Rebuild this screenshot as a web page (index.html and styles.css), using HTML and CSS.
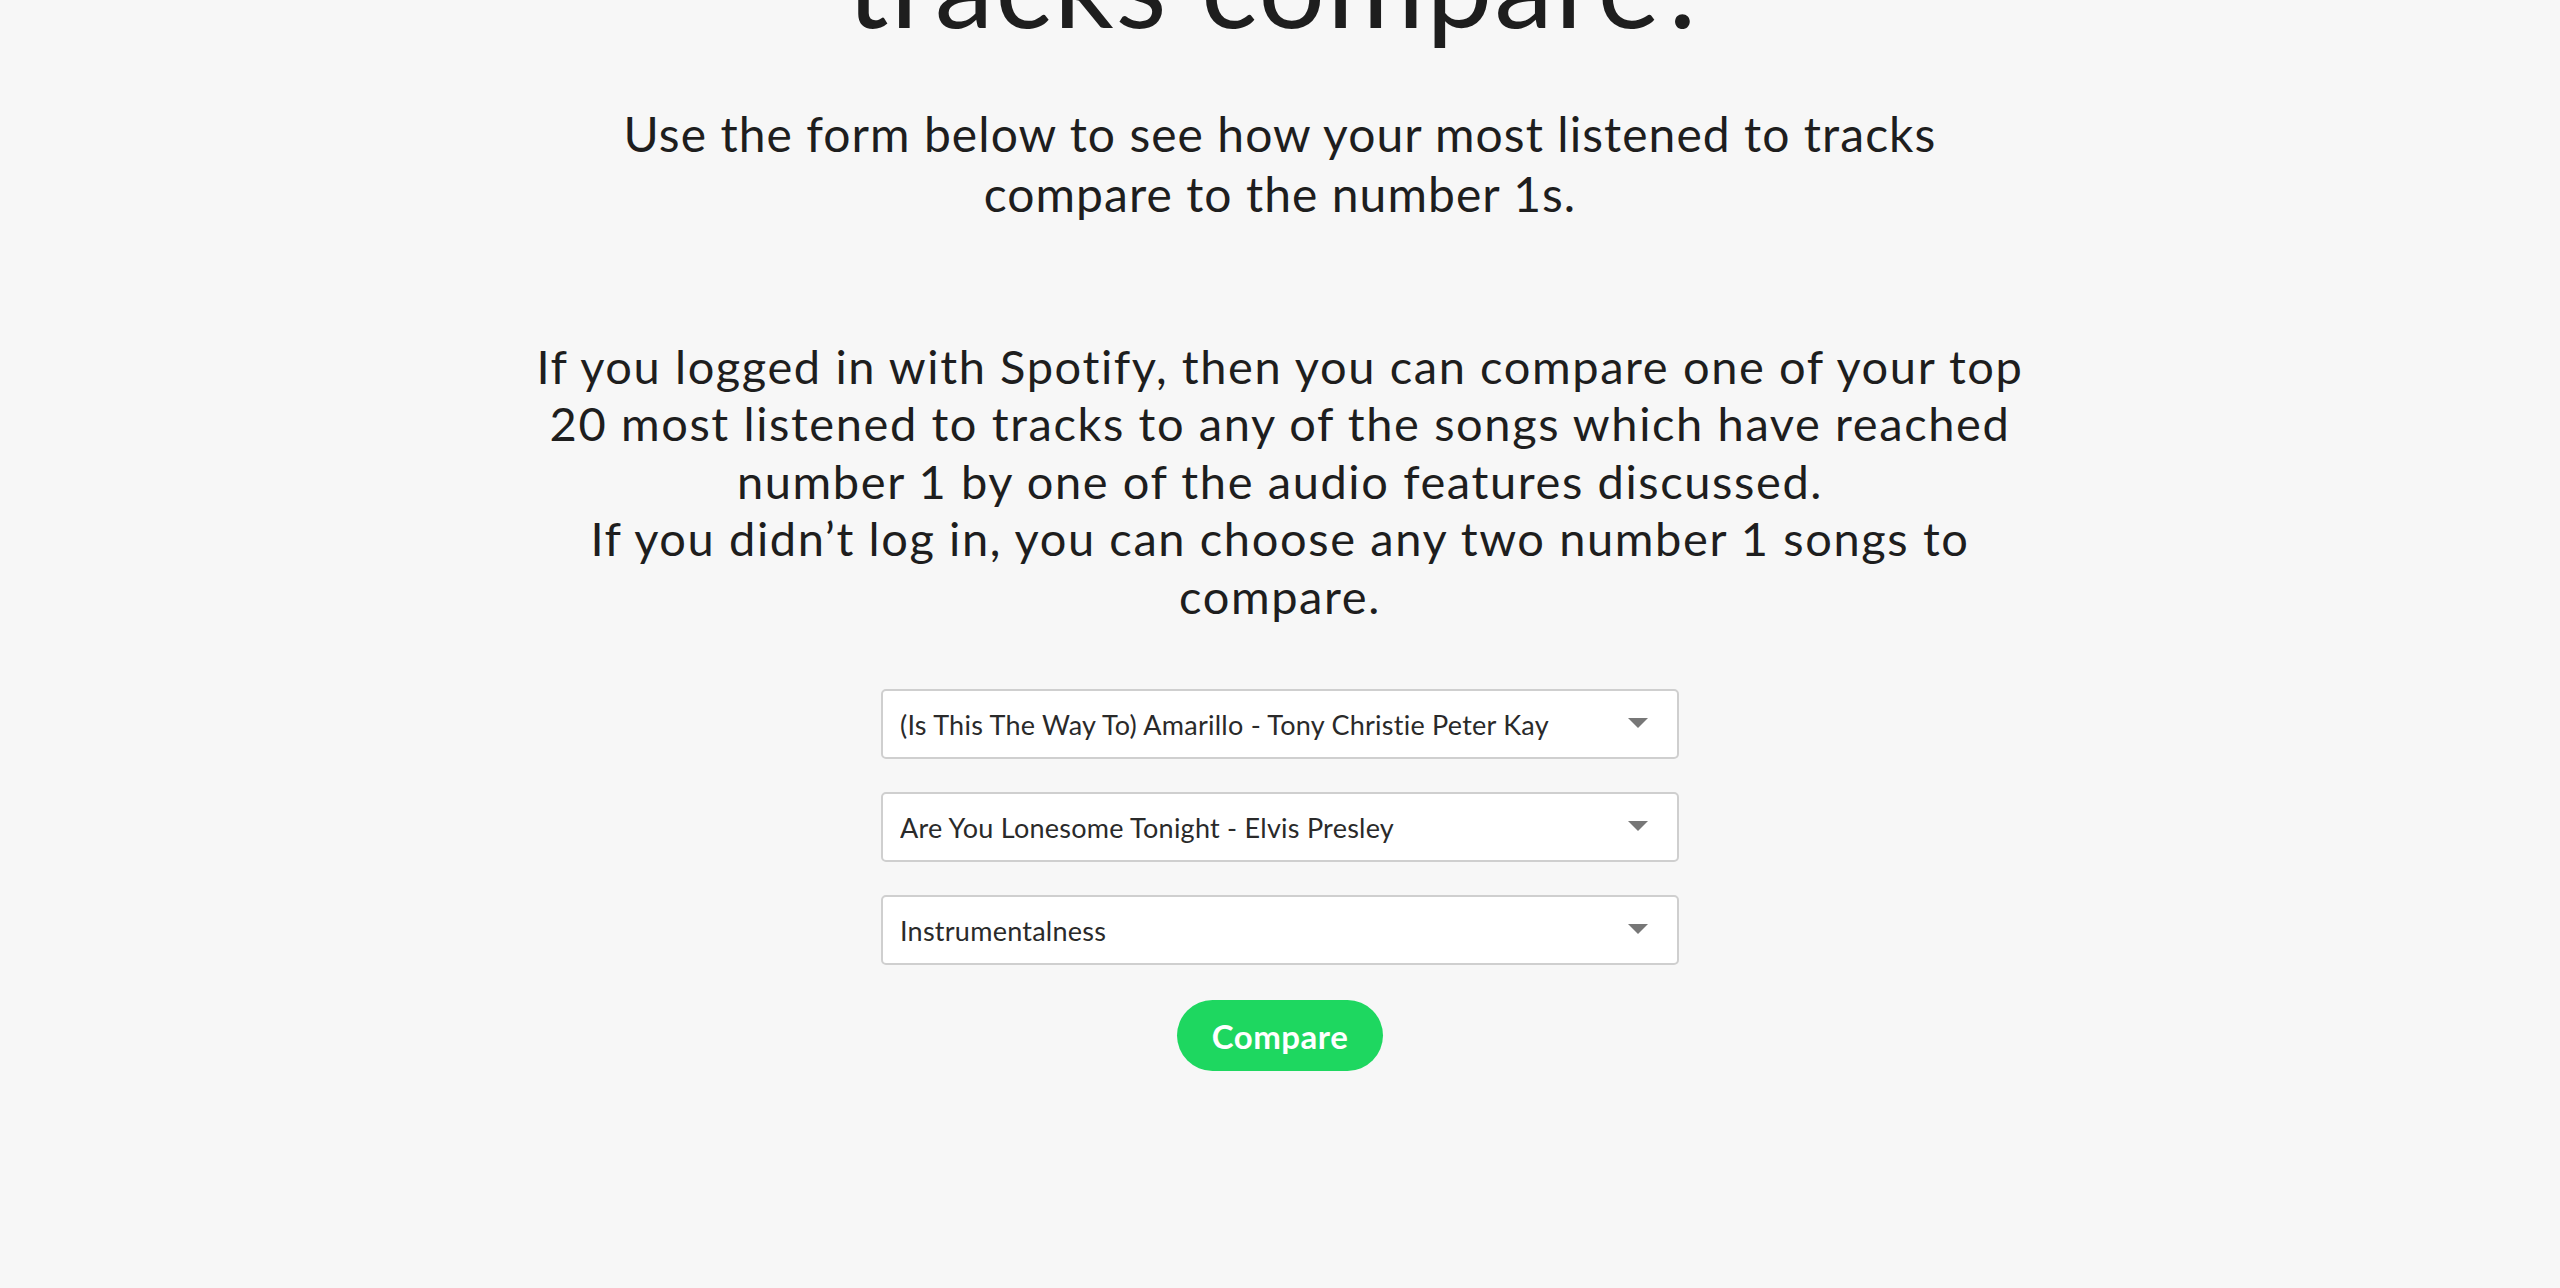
FILE: index.html
```html
<!DOCTYPE html>
<html lang="en">
<head>
<meta charset="utf-8">
<title>Compare tracks</title>
<link rel="stylesheet" href="styles.css">
</head>
<body>
<main class="page">
  <h1 class="title">tracks compare?</h1>
  <p class="lead">Use the form below to see how your most listened to tracks compare to the number 1s.</p>
  <p class="info">If you logged in with Spotify, then you can compare one of your top 20 most listened to tracks to any of the songs which have reached number 1 by one of the audio features discussed.<br>If you didn’t log in, you can choose any two number 1 songs to compare.</p>
  <form class="compare-form">
    <div class="select-wrap">
      <select class="select">
        <option>(Is This The Way To) Amarillo - Tony Christie Peter Kay</option>
      </select>
    </div>
    <div class="select-wrap">
      <select class="select">
        <option>Are You Lonesome Tonight - Elvis Presley</option>
      </select>
    </div>
    <div class="select-wrap">
      <select class="select">
        <option>Instrumentalness</option>
      </select>
    </div>
    <button type="button" class="btn">Compare</button>
  </form>
</main>
</body>
</html>
```

FILE: styles.css
```css
html, body {
  margin: 0;
  padding: 0;
  background: #f7f7f7;
  height: 100%;
  overflow: hidden;
}

body {
  font-family: Lato, "Noto Sans", sans-serif;
  color: #1e1e1e;
}

.page {
  max-width: 1500px;
  margin: 0 auto;
  text-align: center;
  display: flex;
  flex-direction: column;
  align-items: center;
}

.title {
  margin: -88px 0 0;
  font-size: 118px;
  line-height: 1.2;
  font-weight: 400;
  letter-spacing: 2px;
}

.lead {
  margin: 50px 0 0;
  max-width: 1380px;
  font-size: 48px;
  line-height: 60px;
  letter-spacing: 1.05px;
}

.info {
  margin: 114px 0 0;
  font-size: 47px;
  line-height: 57.5px;
  letter-spacing: 1.6px;
}

.compare-form {
  margin-top: 64px;
  display: flex;
  flex-direction: column;
  align-items: center;
  gap: 33px;
}

.select-wrap {
  position: relative;
  width: 798px;
  height: 70px;
}

.select-wrap::after {
  content: "";
  position: absolute;
  right: 31px;
  top: 29px;
  border-left: 10px solid transparent;
  border-right: 10px solid transparent;
  border-top: 10px solid #777;
  pointer-events: none;
}

.select {
  appearance: none;
  -webkit-appearance: none;
  width: 100%;
  height: 100%;
  box-sizing: border-box;
  border: 2px solid #cfcfcf;
  border-radius: 5px;
  background: #fff;
  padding: 0 60px 0 17px;
  font-family: Lato, "Noto Sans", sans-serif;
  font-size: 27px;
  letter-spacing: 0.25px;
  color: #2a2a2a;
  outline: none;
}

.btn {
  margin-top: 2px;
  height: 71px;
  width: 206px;
  border: none;
  border-radius: 36px;
  background: #1ed760;
  color: #fff;
  font-family: Lato, "Noto Sans", sans-serif;
  font-size: 33px;
  font-weight: 700;
  letter-spacing: 0.5px;
  cursor: pointer;
}
```
